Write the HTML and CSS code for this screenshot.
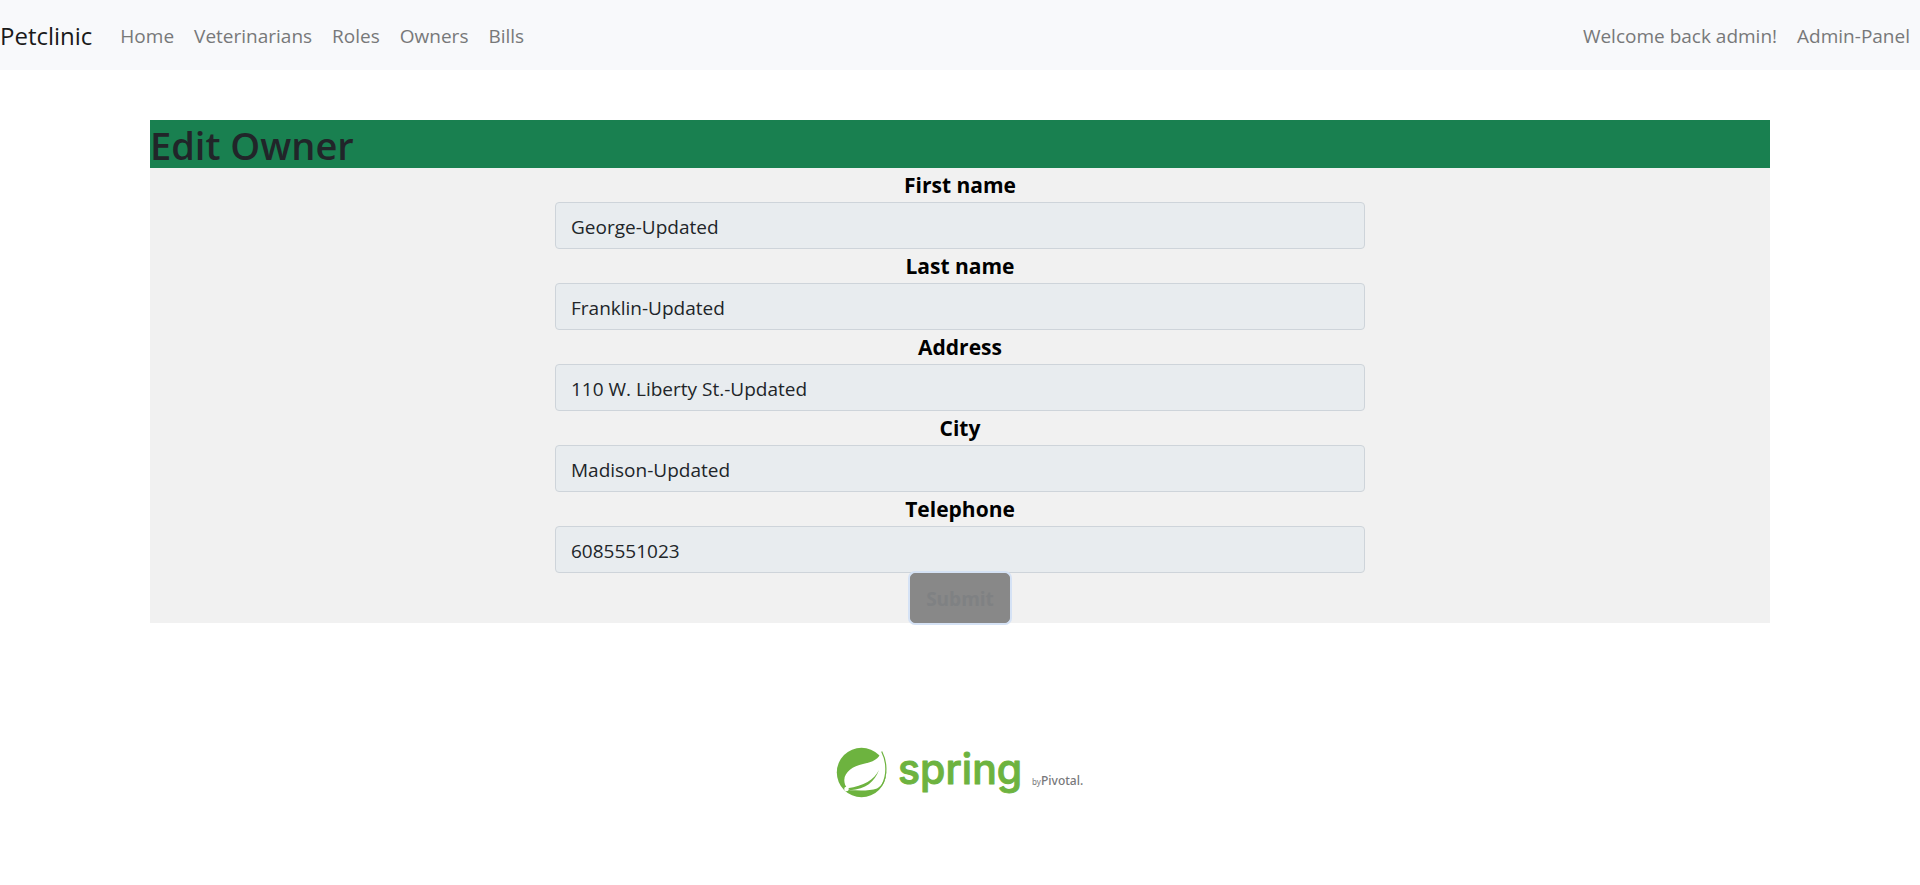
FILE: index.html
```html
<!DOCTYPE html>
<html lang="en">
<head>
<meta charset="utf-8">
<meta name="viewport" content="width=device-width, initial-scale=1">
<title>Petclinic</title>
<link rel="stylesheet" href="styles.css">
</head>
<body>
<nav class="navbar">
  <a class="brand" href="#">Petclinic</a>
  <ul class="nav-list nav-main">
    <li><a class="nav-link" href="#">Home</a></li>
    <li><a class="nav-link" href="#">Veterinarians</a></li>
    <li><a class="nav-link" href="#">Roles</a></li>
    <li><a class="nav-link" href="#">Owners</a></li>
    <li><a class="nav-link" href="#">Bills</a></li>
  </ul>
  <ul class="nav-list">
    <li><a class="nav-link" href="#">Welcome back admin!</a></li>
    <li><a class="nav-link" href="#">Admin-Panel</a></li>
  </ul>
</nav>
<main class="container">
  <h1 class="page-title">Edit Owner</h1>
  <form class="owner-form">
    <label class="form-label" for="first-name">First name</label>
    <input class="form-control" id="first-name" type="text" value="George-Updated" readonly>
    <label class="form-label" for="last-name">Last name</label>
    <input class="form-control" id="last-name" type="text" value="Franklin-Updated" readonly>
    <label class="form-label" for="address">Address</label>
    <input class="form-control" id="address" type="text" value="110 W. Liberty St.-Updated" readonly>
    <label class="form-label" for="city">City</label>
    <input class="form-control" id="city" type="text" value="Madison-Updated" readonly>
    <label class="form-label" for="telephone">Telephone</label>
    <input class="form-control" id="telephone" type="text" value="6085551023" readonly>
    <button class="submit" type="button">Submit</button>
  </form>
</main>
<footer class="footer">
  <svg class="logo" width="250" height="60" viewBox="0 0 250 60" role="img" aria-label="spring by Pivotal">
    <circle cx="26.500" cy="32.500" r="24.700" fill="#6db33f"/>
    <path d="M46.700 11.500C44 19 38 22 28 24C18 26 9.500 32 9.300 40C9.300 43 10.300 46 12 48L15 50.300C26 50.500 35 51 42 48.500C48 45 51 38 51 31C51 24 49 17 46.700 11.500Z" fill="#fff"/>
    <path d="M44 30C39 40 29 46 12.500 48.200L15 50.300C31 49 39.500 42 44 30Z" fill="#6db33f"/>
    <circle cx="11.500" cy="49" r="2.300" fill="#fff"/>
    <path d="M46.700 11.500C52 22 52.500 35 47 45" fill="none" stroke="#6db33f" stroke-width="1.200"/>
    <text class="logo-word" x="63" y="44">spring</text>
    <text class="logo-by" x="197" y="45">by</text>
    <text class="logo-owner" x="206" y="45">Pivotal.</text>
  </svg>
</footer>
</body>
</html>
```
FILE: styles.css
```css
* {
  box-sizing: border-box;
}

body {
  margin: 0;
  background: #fff;
  color: #212529;
  font-family: "Open Sans", "Noto Sans", sans-serif;
  font-size: 19px;
  line-height: 30px;
}

.navbar {
  display: flex;
  align-items: center;
  padding: 11px 0 9px;
  background: #f8f9fb;
}

.brand {
  margin-right: 18px;
  color: #1a1a1a;
  font-size: 24px;
  text-decoration: none;
}

.nav-list {
  display: flex;
  margin: 0;
  padding: 0;
  list-style: none;
}

.nav-main {
  flex: 1;
}

.nav-link {
  display: block;
  padding: 10px;
  color: #777879;
  text-decoration: none;
}

.container {
  max-width: 1620px;
  margin: 50px auto 0;
}

.page-title {
  margin: 0;
  padding-top: 2px;
  background: #198050;
  font-size: 38px;
  font-weight: 600;
  line-height: 46px;
}

.owner-form {
  display: flex;
  flex-direction: column;
  align-items: center;
  background: #f1f1f1;
}

.form-label {
  color: #000;
  font-size: 21px;
  font-weight: 700;
  line-height: 34px;
}

.form-control {
  width: 50%;
  height: 47px;
  padding: 9px 15px 7px;
  border: 1px solid #ced4da;
  border-radius: 4px;
  background: #e8ecef;
  color: #212529;
  font: inherit;
}

.submit {
  padding: 10px 15px 8px;
  border: 1px solid #888;
  border-radius: 5px;
  background: #888;
  box-shadow: 0 0 0 2px #d5e2f5;
  color: #7f8183;
  font: inherit;
  font-weight: 700;
}

.footer {
  display: flex;
  justify-content: center;
  padding-top: 117px;
}

.logo-word {
  fill: #6db33f;
  stroke: #6db33f;
  stroke-width: 1px;
  stroke-linejoin: round;
  font-family: Inter, sans-serif;
  font-size: 41px;
  font-weight: 500;
}

.logo-by,
.logo-owner {
  fill: #77787a;
  font-family: "Noto Sans", sans-serif;
  font-size: 8px;
}

.logo-owner {
  font-size: 12px;
  font-weight: 500;
}
```
